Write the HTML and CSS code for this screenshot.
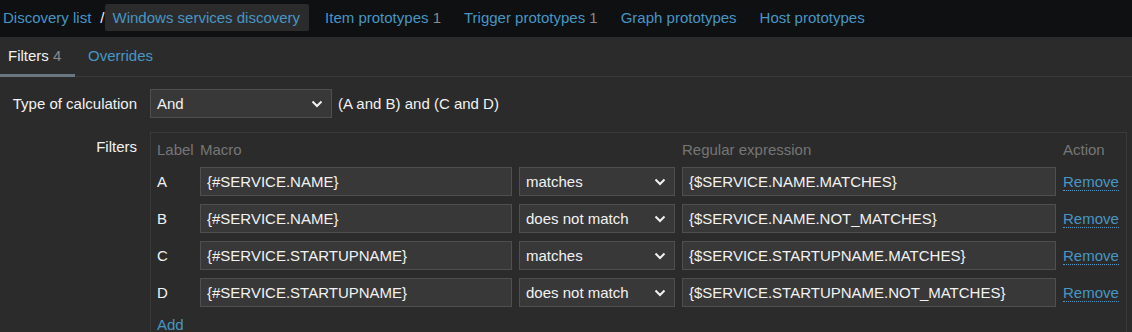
FILE: index.html
```html
<!DOCTYPE html>
<html lang="en">
<head>
    <meta charset="UTF-8">
    <title>Windows services discovery</title>
    <link rel="stylesheet" href="styles.css">
</head>
<body>
    <!-- Breadcrumbs and related prototype links -->
    <nav class="crumbs">
        <a class="crumb first" href="#">Discovery list</a>
        <span class="sep">/</span>
        <a class="crumb current" href="#">Windows services discovery</a>
        <a class="crumb" href="#">Item prototypes <span class="count">1</span></a>
        <a class="crumb" href="#">Trigger prototypes <span class="count">1</span></a>
        <a class="crumb" href="#">Graph prototypes</a>
        <a class="crumb" href="#">Host prototypes</a>
    </nav>

    <!-- Tabs -->
    <div class="tabs">
        <a class="tab active" href="#">Filters <span class="count">4</span></a>
        <a class="tab" href="#">Overrides</a>
    </div>

    <div class="form">
        <div class="form-row calc-row">
            <label class="form-label">Type of calculation</label>
            <div class="form-field">
                <div class="select calc-select">And <svg class="arrow" width="12" height="8" viewBox="0 0 12 8"><path d="M1.5 1.5 6 6l4.5-4.5" fill="none" stroke="#f2f2f2" stroke-width="2"/></svg></div>
                <span class="formula">(A and B) and (C and D)</span>
            </div>
        </div>

        <div class="form-row">
            <label class="form-label filters-label">Filters</label>
            <div class="filter-box">
                <div class="filter-grid">
                    <div class="head">Label</div>
                    <div class="head">Macro</div>
                    <div class="head"></div>
                    <div class="head">Regular expression</div>
                    <div class="head">Action</div>

                    <div class="letter">A</div>
                    <div class="input">{#SERVICE.NAME}</div>
                    <div class="select">matches <svg class="arrow" width="12" height="8" viewBox="0 0 12 8"><path d="M1.5 1.5 6 6l4.5-4.5" fill="none" stroke="#f2f2f2" stroke-width="2"/></svg></div>
                    <div class="input">{$SERVICE.NAME.MATCHES}</div>
                    <div class="action"><a class="remove" href="#">Remove</a></div>

                    <div class="letter">B</div>
                    <div class="input">{#SERVICE.NAME}</div>
                    <div class="select">does not match <svg class="arrow" width="12" height="8" viewBox="0 0 12 8"><path d="M1.5 1.5 6 6l4.5-4.5" fill="none" stroke="#f2f2f2" stroke-width="2"/></svg></div>
                    <div class="input">{$SERVICE.NAME.NOT_MATCHES}</div>
                    <div class="action"><a class="remove" href="#">Remove</a></div>

                    <div class="letter">C</div>
                    <div class="input">{#SERVICE.STARTUPNAME}</div>
                    <div class="select">matches <svg class="arrow" width="12" height="8" viewBox="0 0 12 8"><path d="M1.5 1.5 6 6l4.5-4.5" fill="none" stroke="#f2f2f2" stroke-width="2"/></svg></div>
                    <div class="input">{$SERVICE.STARTUPNAME.MATCHES}</div>
                    <div class="action"><a class="remove" href="#">Remove</a></div>

                    <div class="letter">D</div>
                    <div class="input">{#SERVICE.STARTUPNAME}</div>
                    <div class="select">does not match <svg class="arrow" width="12" height="8" viewBox="0 0 12 8"><path d="M1.5 1.5 6 6l4.5-4.5" fill="none" stroke="#f2f2f2" stroke-width="2"/></svg></div>
                    <div class="input">{$SERVICE.STARTUPNAME.NOT_MATCHES}</div>
                    <div class="action"><a class="remove" href="#">Remove</a></div>
                </div>
                <a class="add" href="#">Add</a>
            </div>
        </div>
    </div>
</body>
</html>
```

FILE: styles.css
```css
body {
    margin: 0;
    background-color: #2b2b2b;
    color: #f2f2f2;
    font-family: "Liberation Sans", Arial, sans-serif;
    font-size: 15px;
    overflow: hidden;
}

a {
    color: #4796c4;
    text-decoration: none;
}

.count {
    color: #8a8a8a;
}

/* Top breadcrumb bar */
.crumbs {
    height: 37px;
    background-color: #0e1012;
    display: flex;
    align-items: center;
    padding-bottom: 2px;
    box-sizing: border-box;
}

.crumb {
    line-height: 27px;
    padding: 0 8px;
    margin-right: 7px;
}

.crumb.first {
    padding-left: 3px;
    margin-right: 0;
}

.sep {
    color: #f2f2f2;
    margin: 0 0 0 1px;
}

.crumb.current {
    background-color: #2b2b2b;
    border-radius: 2px;
    padding: 0 9px 0 8px;
    margin-right: 8px;
}

/* Tabs */
.tabs {
    display: flex;
    height: 40px;
    border-bottom: 1px solid #3a3a3a;
    box-sizing: border-box;
}

.tab {
    padding: 0 8px;
    line-height: 38px;
}

.tab.active {
    color: #f2f2f2;
    width: 75px;
    box-sizing: border-box;
    border-bottom: 3px solid #6b7780;
    line-height: 36px;
    margin-bottom: -1px;
    padding-top: 1px;
}

.tab + .tab {
    margin-left: 5px;
}

/* Form */
.form {
    padding-top: 12px;
}

.form-row {
    display: flex;
    align-items: flex-start;
}

.form-label {
    width: 137px;
    text-align: right;
    margin-right: 13px;
    line-height: 29px;
}

.form-field {
    display: flex;
    align-items: center;
}

.calc-row {
    margin-bottom: 14px;
}

.select,
.input {
    height: 29px;
    box-sizing: border-box;
    background-color: #383838;
    border: 1px solid #4f4f4f;
    line-height: 27px;
    padding: 0 6px;
    white-space: nowrap;
}

.select {
    display: flex;
    align-items: center;
    justify-content: space-between;
}

.arrow {
    margin-right: 2px;
}

.calc-select {
    width: 182px;
}

.formula {
    margin-left: 6px;
}

.filters-label {
    line-height: 30px;
}

.filter-box {
    width: 977px;
    border: 1px solid #3a3a3a;
    padding: 0 0 0 6px;
    box-sizing: border-box;
    height: 230px;
}

.filter-grid {
    display: grid;
    grid-template-columns: 36px 312px 156px 374px auto;
    column-gap: 7px;
    row-gap: 8px;
    align-items: center;
}

.head {
    color: #767676;
    line-height: 34px;
    margin-bottom: -8px;
}

.letter {
    line-height: 29px;
}

.remove {
    border-bottom: 1px dotted #4796c4;
    line-height: 17px;
    display: inline-block;
}

.add {
    display: inline-block;
    margin-top: 9px;
}
```
